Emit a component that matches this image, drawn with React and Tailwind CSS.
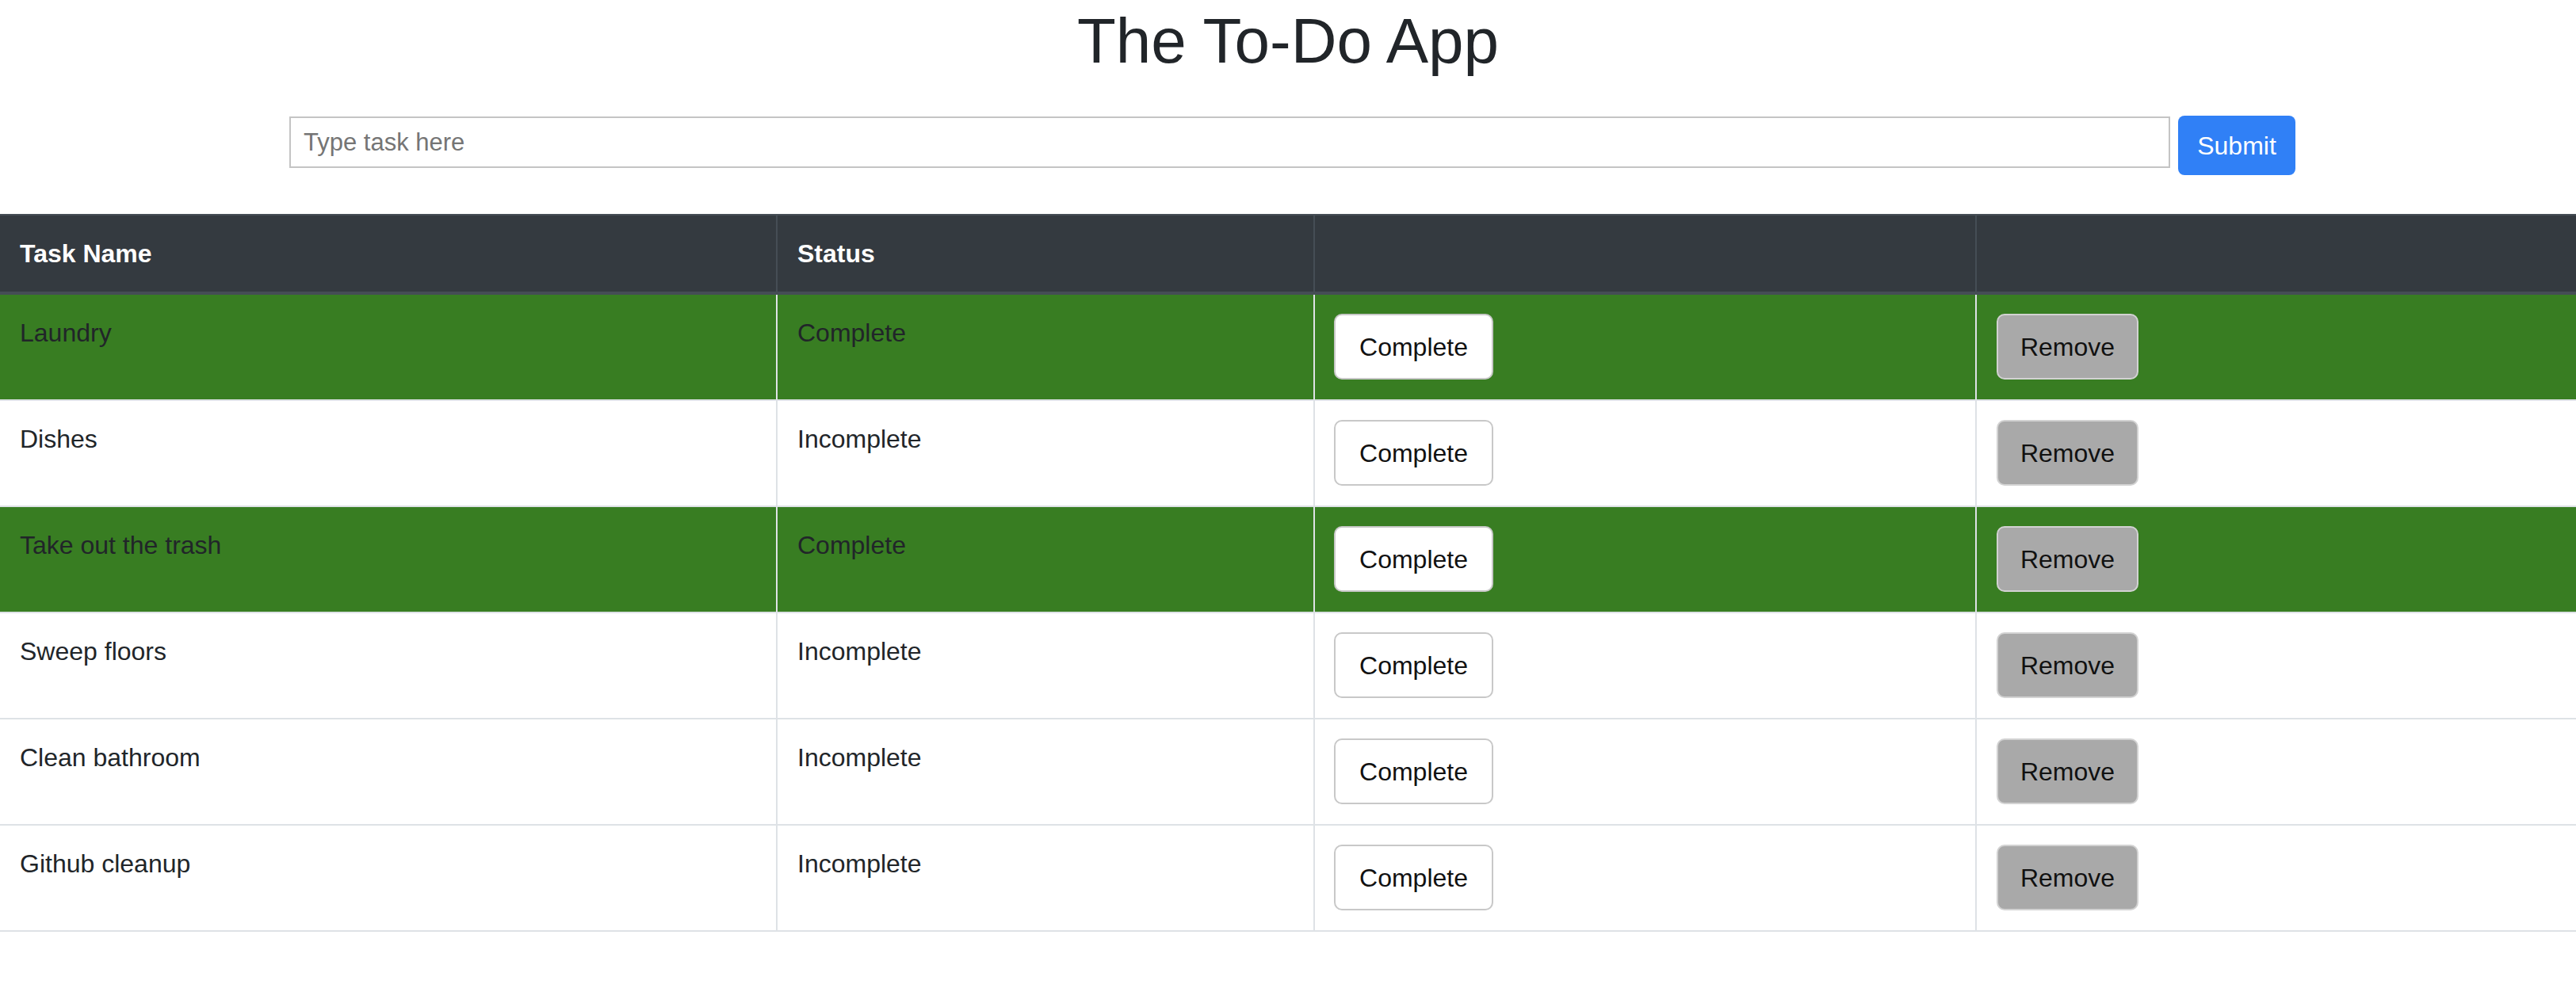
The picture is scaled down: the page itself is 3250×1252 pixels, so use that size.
import React, { useState } from 'react';

const initialTasks = [
  { name: 'Laundry', done: true },
  { name: 'Dishes', done: false },
  { name: 'Take out the trash', done: true },
  { name: 'Sweep floors', done: false },
  { name: 'Clean bathroom', done: false },
  { name: 'Github cleanup', done: false },
];

const App = () => {
  const [tasks, setTasks] = useState(initialTasks);
  const [text, setText] = useState('');

  const addTask = (e) => {
    e.preventDefault();
    if (!text.trim()) return;
    setTasks([...tasks, { name: text.trim(), done: false }]);
    setText('');
  };

  const completeTask = (i) => {
    setTasks(tasks.map((t, idx) => (idx === i ? { ...t, done: true } : t)));
  };

  const removeTask = (i) => {
    setTasks(tasks.filter((_, idx) => idx !== i));
  };

  return (
    <div className="min-h-screen bg-white text-[#212529] font-['Liberation_Sans',Arial,sans-serif]">
      <h1 className="pt-[4px] text-center text-[80px] leading-[96px] font-medium">The To-Do App</h1>

      <form onSubmit={addTask} className="mt-[46px] flex justify-center items-start gap-[10px] pl-[11px]">
        <input
          value={text}
          onChange={(e) => setText(e.target.value)}
          placeholder="Type task here"
          className="mt-[1px] w-[2373px] h-[65px] border-2 border-[#c4c4c4] px-[16px] text-[31px] outline-none placeholder:text-[#757575]"
        />
        <button type="submit" className="h-[75px] w-[148px] rounded-[8px] bg-[#3080f6] text-white text-[32px]">
          Submit
        </button>
      </form>

      <table className="mt-[49px] w-full border-collapse table-fixed text-[32px] leading-[48px]">
        <colgroup>
          <col className="w-[980px]" />
          <col className="w-[678px]" />
          <col className="w-[835px]" />
          <col />
        </colgroup>
        <thead>
          <tr className="bg-[#343a40] text-white">
            <th className="text-left font-bold px-[25px] py-[24px] border-t-2 border-b-4 border-[#454d55]">Task Name</th>
            <th className="text-left font-bold px-[25px] py-[24px] border-t-2 border-b-4 border-l-2 border-[#454d55]">Status</th>
            <th className="border-t-2 border-b-4 border-l-2 border-[#454d55]"></th>
            <th className="border-t-2 border-b-4 border-l-2 border-[#454d55]"></th>
          </tr>
        </thead>
        <tbody>
          {tasks.map((t, i) => (
            <tr key={i} className={t.done ? 'bg-[#387d22]' : 'bg-white'}>
              <td className="align-top px-[25px] pt-[24px] border-b-2 border-[#dee2e6]">{t.name}</td>
              <td className="align-top px-[25px] pt-[24px] border-b-2 border-l-2 border-[#dee2e6]">
                {t.done ? 'Complete' : 'Incomplete'}
              </td>
              <td className="align-top px-[24px] pt-[24px] pb-[25px] border-b-2 border-l-2 border-[#dee2e6]">
                <button
                  onClick={() => completeTask(i)}
                  className="h-[83px] w-[201px] rounded-[10px] border-2 border-[#c8c8c8] bg-white text-[32px] text-[#111]"
                >
                  Complete
                </button>
              </td>
              <td className="align-top px-[25px] pt-[24px] pb-[25px] border-b-2 border-l-2 border-[#dee2e6]">
                <button
                  onClick={() => removeTask(i)}
                  className="h-[83px] w-[179px] rounded-[10px] border-2 border-[#d2d2d2] bg-[#a9a9a9] text-[32px] text-[#111]"
                >
                  Remove
                </button>
              </td>
            </tr>
          ))}
        </tbody>
      </table>
    </div>
  );
};

export default App;
